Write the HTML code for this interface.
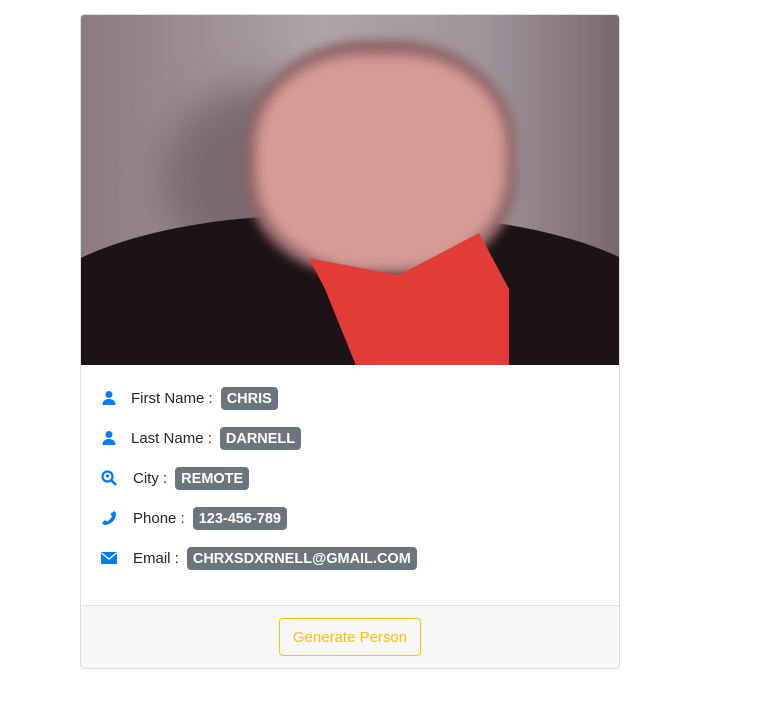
<!DOCTYPE html><html><head><style>
body{margin:0;background:#fff;font-family:"Liberation Sans",sans-serif;}
.card{position:absolute;left:80px;top:14px;width:538px;height:653px;border:1px solid #dfdfdf;border-radius:4px;overflow:hidden;}
.photo{position:absolute;left:0;top:0;width:538px;height:350px;overflow:hidden;background:linear-gradient(90deg,#8a7a82,#b0a4a8 45%,#a0939a 75%,#7a6870);}
.row{position:absolute;left:20px;height:24px;display:flex;align-items:center;font-size:15px;color:#212529;}
.row svg{width:16px;height:16px;margin-right:14px;}
.b{background:#6c757d;color:#fff;font-weight:bold;font-size:14.5px;line-height:16px;padding:4px 6px 3px;border-radius:4px;margin-left:8px;}
.foot{position:absolute;left:0;top:590px;width:538px;height:63px;background:#f7f7f7;border-top:1px solid #dfdfdf;}
.btn{position:absolute;left:198px;top:12px;width:140px;height:36px;border:1px solid #ffc107;border-radius:4px;color:#ffc107;font-size:15px;display:flex;align-items:center;justify-content:center;}
</style></head><body>
<div class="card">
<div class="photo">
<div style="position:absolute;left:80px;top:70px;width:200px;height:190px;border-radius:50%;background:#7a6a72;filter:blur(20px)"></div>
<div style="position:absolute;left:-60px;top:200px;width:660px;height:240px;border-radius:45% 45% 0 0;background:#1d1315"></div>
<div style="position:absolute;left:165px;top:25px;width:270px;height:235px;border-radius:45% 45% 40% 40%;background:#8e6466;filter:blur(5px)"></div>
<div style="position:absolute;left:175px;top:40px;width:250px;height:215px;border-radius:42% 42% 45% 45%;background:#d69b95;filter:blur(6px)"></div>
<div style="position:absolute;left:228px;top:218px;width:200px;height:140px;background:#e23c3a;clip-path:polygon(0 18%,45% 30%,85% 0,100% 40%,100% 100%,25% 100%,8% 40%);"></div>
</div>
<div class="row" style="top:371px"><svg viewBox="0 0 16 16"><circle cx="8" cy="4.5" r="3.5" fill="#007bff"/><path d="M1.5 15c0-4 2.5-6 6.5-6s6.5 2 6.5 6z" fill="#007bff"/></svg>First Name :<span class="b">CHRIS</span></div>
<div class="row" style="top:411px"><svg viewBox="0 0 16 16"><circle cx="8" cy="4.5" r="3.5" fill="#007bff"/><path d="M1.5 15c0-4 2.5-6 6.5-6s6.5 2 6.5 6z" fill="#007bff"/></svg>Last Name :<span class="b">DARNELL</span></div>
<div class="row" style="top:451px"><svg viewBox="0 0 16 16" style="margin-right:16px"><circle cx="6.5" cy="6.5" r="5" fill="none" stroke="#007bff" stroke-width="2.2"/><circle cx="6.5" cy="6" r="1.6" fill="#007bff"/><path d="M10 10l5 5" stroke="#007bff" stroke-width="2.6"/></svg>City :<span class="b">REMOTE</span></div>
<div class="row" style="top:491px"><svg viewBox="0 0 16 16" style="margin-right:16px"><path d="M13 1l2 2c0 7-5 12-12 12l-2-2 3-3 2 1.5c2-1 4-3 5-5L9.5 4z" fill="#007bff"/></svg>Phone :<span class="b">123-456-789</span></div>
<div class="row" style="top:531px"><svg viewBox="0 0 16 16" style="margin-right:16px"><rect x="0" y="2" width="16" height="12" rx="1" fill="#007bff"/><path d="M0.5 3l7.5 6 7.5-6" fill="none" stroke="#fff" stroke-width="1.3"/></svg>Email :<span class="b">CHRXSDXRNELL@GMAIL.COM</span></div>
<div class="foot"><div class="btn">Generate Person</div></div>
</div>
</body></html>
